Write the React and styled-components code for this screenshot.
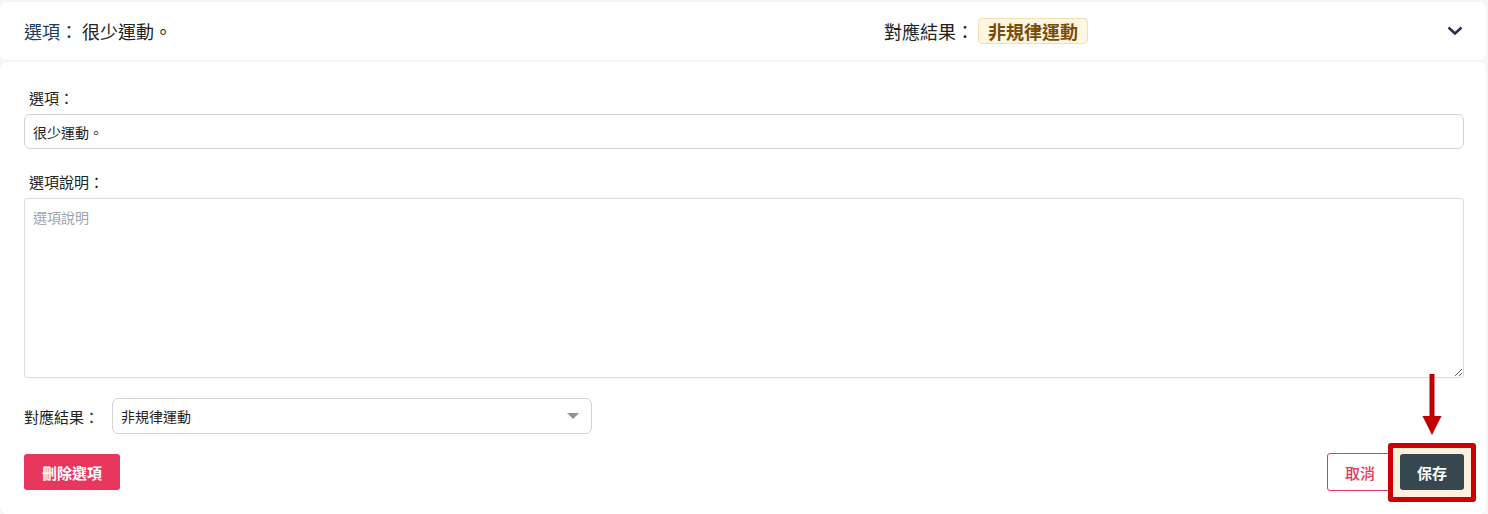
import React from "react";
import styled, { createGlobalStyle } from "styled-components";

const Global = createGlobalStyle`
  html, body { margin: 0; padding: 0; background: #f6f6f7; }
  body { font-family: "Noto Sans", "Noto Sans CJK TC", sans-serif; color: #222; }
  * { box-sizing: border-box; }
`;

const Page = styled.div`
  width: 1488px;
  height: 514px;
  padding: 2px 2px 0 0;
  display: flex;
  flex-direction: column;
  gap: 2px;
  overflow: hidden;
`;

const Card = styled.div`
  background: #fff;
  border-radius: 6px;
  box-shadow: 0 0 2px rgba(0,0,0,0.06);
`;

const Header = styled(Card)`
  height: 58px;
  display: grid;
  grid-template-columns: 860px 1fr auto;
  align-items: center;
  padding: 0 22px 0 24px;
`;

const HeadLeft = styled.div`
  font-size: 18px;
  display: flex;
  align-items: center;
`;

const HeadKey = styled.span`
  color: #1f3b5c;
`;

const HeadVal = styled.span`
  color: #222;
  margin-left: 4px;
`;

const HeadMid = styled.div`
  display: flex;
  align-items: center;
  font-size: 18px;
  color: #222;
`;

const Badge = styled.span`
  margin-left: 4px;
  background: #fdf6e1;
  border: 1px solid #f3e0ad;
  border-radius: 4px;
  color: #7a4b06;
  font-weight: 600;
  font-size: 18px;
  padding: 0 9px;
  height: 26px;
  display: inline-flex;
  align-items: center;
`;

const Chevron = styled.svg`
  width: 18px;
  height: 18px;
  display: block;
`;

const Body = styled(Card)`
  flex: 1;
  padding: 25px 22px 0 24px;
  display: flex;
  flex-direction: column;
`;

const Label = styled.div`
  font-size: 15px;
  color: #222;
  padding-left: 5px;
  line-height: 22px;
  margin-bottom: 5px;
`;

const TextInput = styled.input`
  width: 100%;
  height: 35px;
  border: 1px solid #d2d2d8;
  border-radius: 6px;
  font-family: inherit;
  font-size: 14px;
  color: #222;
  padding: 0 8px;
  outline: none;
  margin-bottom: 22px;
`;

const TextArea = styled.textarea`
  width: 100%;
  height: 180px;
  border: 1px solid #dcdce0;
  border-radius: 3px;
  font-family: inherit;
  font-size: 14px;
  padding: 8px 8px;
  resize: vertical;
  outline: none;
  margin: 0 0 20px 0;
  display: block;
  &::placeholder { color: #a0a3aa; }
`;

const SelectRow = styled.div`
  display: flex;
  align-items: center;
  gap: 8px;
  margin-bottom: 19px;
`;

const RowLabel = styled.span`
  font-size: 15px;
  color: #222;
  width: 80px;
`;

const SelectBox = styled.div`
  width: 480px;
  height: 36px;
  border: 1px solid #d2d2d8;
  border-radius: 6px;
  display: flex;
  align-items: center;
  justify-content: space-between;
  padding: 0 12px 0 8px;
  font-size: 14px;
  color: #222;
`;

const Caret = styled.span`
  width: 0;
  height: 0;
  border-left: 6px solid transparent;
  border-right: 6px solid transparent;
  border-top: 6px solid #8f929a;
`;

const Actions = styled.div`
  display: flex;
  justify-content: space-between;
  align-items: center;
`;

const Btn = styled.button`
  height: 36px;
  padding: 0 16px;
  border-radius: 3px;
  font-family: inherit;
  font-size: 15px;
  font-weight: 700;
  cursor: pointer;
  border: 1px solid transparent;
`;

const Danger = styled(Btn)`
  background: #e8365d;
  color: #fff;
  padding: 0 17px;
`;

const Outline = styled(Btn)`
  background: #fff;
  color: #e8365d;
  border-color: #e8365d;
  height: 38px;
  font-weight: 500;
  padding: 0 16px 0 17px;
`;

const Dark = styled(Btn)`
  background: #37474f;
  color: #fff;
`;

const RightGroup = styled.div`
  display: flex;
  gap: 8px;
  align-items: center;
  position: relative;
`;

const Highlight = styled.div`
  position: absolute;
  right: -12px;
  top: -10px;
  width: 88px;
  height: 59px;
  border: 5px solid #cc0000;
  border-radius: 3px;
  background: #fdf0dc;
  z-index: 0;
`;

const SaveWrap = styled.div`
  position: relative;
  z-index: 1;
`;

const Arrow = styled.svg`
  position: absolute;
  right: 22px;
  top: -79px;
  width: 20px;
  height: 62px;
`;

export default function App() {
  return (
    <>
      <Global />
      <Page>
        <Header>
          <HeadLeft>
            <HeadKey>選項：</HeadKey>
            <HeadVal>很少運動。</HeadVal>
          </HeadLeft>
          <HeadMid>
            對應結果：<Badge>非規律運動</Badge>
          </HeadMid>
          <Chevron viewBox="0 0 18 18">
            <path d="M2.5 5.5 L9 11.5 L15.5 5.5" fill="none" stroke="#1f3050" strokeWidth="2.4" />
          </Chevron>
        </Header>
        <Body>
          <Label>選項：</Label>
          <TextInput defaultValue="很少運動。" />
          <Label>選項說明：</Label>
          <TextArea placeholder="選項說明" />
          <SelectRow>
            <RowLabel>對應結果：</RowLabel>
            <SelectBox>
              <span>非規律運動</span>
              <Caret />
            </SelectBox>
          </SelectRow>
          <Actions>
            <Danger>刪除選項</Danger>
            <RightGroup>
              <Outline>取消</Outline>
              <SaveWrap>
                <Dark>保存</Dark>
              </SaveWrap>
              <Highlight />
              <Arrow viewBox="0 0 20 62">
                <rect x="7.5" y="0" width="5" height="44" fill="#c00000" />
                <polygon points="0.5,42 19.5,42 10,61" fill="#c00000" />
              </Arrow>
            </RightGroup>
          </Actions>
        </Body>
      </Page>
    </>
  );
}
